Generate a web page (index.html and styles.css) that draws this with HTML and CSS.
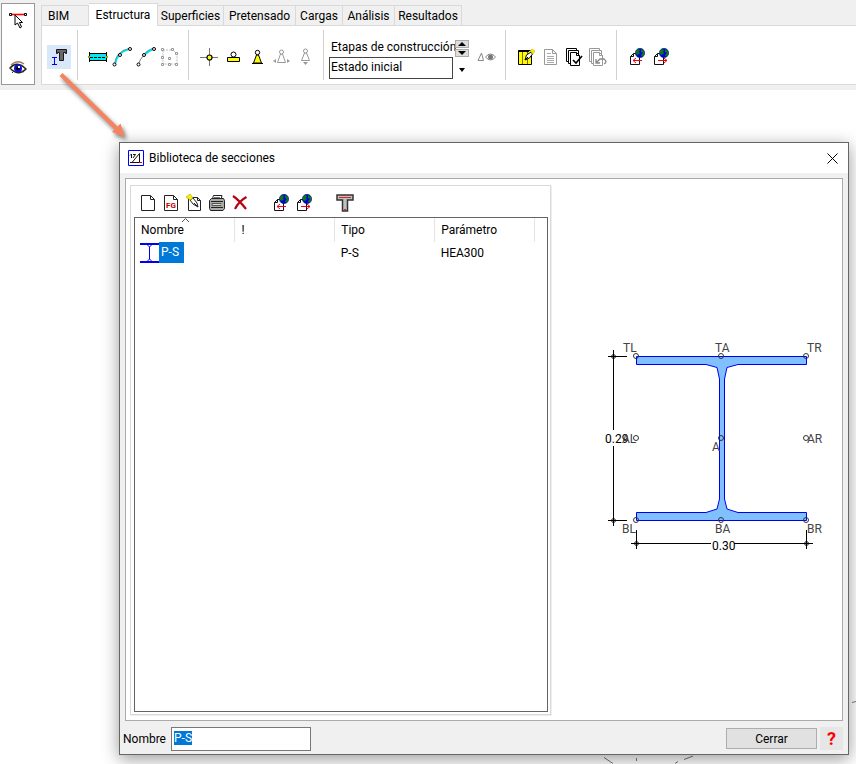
FILE: index.html
```html
<!DOCTYPE html>
<html lang="es">
<head>
    <meta charset="UTF-8">
    <meta name="viewport" content="width=device-width, initial-scale=1.0">
    <title>Biblioteca de secciones</title>
    <link rel="stylesheet" href="styles.css">
</head>
<body>
    <!-- shared icons -->
    <svg class="defs" aria-hidden="true">
        <symbol id="globe" viewBox="0 0 10 10">
            <circle cx="5" cy="5" r="4.7" fill="#0000e0" stroke="#103050" stroke-width=".6"/>
            <path d="M1 3L3 1L5 2L4 4L5 5L3 7L1 6ZM6 1L9 3L9 7L7 9L6 7L8 5L6 4Z" fill="#087818"/>
        </symbol>
        <symbol id="import" viewBox="0 0 18 18">
            <path d="M2.5 16.5V8.5L5.5 5.5H11.5V16.5Z" fill="#fff" stroke="#111"/>
            <path d="M2.5 8.5H5.5V5.5" fill="none" stroke="#111"/>
            <use href="#globe" x="7" y="0" width="10" height="10"/>
            <path d="M5 12.5H14M8 10L5 12.5L8 15" fill="none" stroke="#f00018"/>
        </symbol>
        <symbol id="export" viewBox="0 0 18 18">
            <path d="M2.5 16.5V8.5L5.5 5.5H11.5V16.5Z" fill="#fff" stroke="#111"/>
            <path d="M2.5 8.5H5.5V5.5" fill="none" stroke="#111"/>
            <use href="#globe" x="7" y="0" width="10" height="10"/>
            <path d="M6 12.5H15M12 10L15 12.5L12 15" fill="none" stroke="#f00018"/>
        </symbol>
    </svg>

    <header class="app-bar">
        <div class="side-tools">
            <button aria-label="Seleccionar">
                <svg width="20" height="18" viewBox="0 0 20 18">
                    <path d="M3 3.5H17" stroke="#f00" stroke-width="1.6"/>
                    <path d="M1.5 2.5H3.5V4.5H1.5ZM16.5 2.5H18.5V4.5H16.5Z" fill="#fff" stroke="#000"/>
                    <path d="M7 4L7 14L9.5 12L12 17L13.5 16L11.5 11.5H14.5Z" fill="#fff" stroke="#000"/>
                </svg>
            </button>
            <button aria-label="Visualizar">
                <svg width="18" height="16" viewBox="0 0 18 16">
                    <path d="M2 5Q8 -1 15 4" fill="none" stroke="#a07858" stroke-width="1.5"/>
                    <path d="M1 8Q8 0 17 9Q9 17 1 8Z" fill="#fff" stroke="#222" stroke-width="1.4"/>
                    <circle cx="9" cy="8.5" r="4" fill="#1010d0"/>
                    <circle cx="9" cy="8.5" r="1.8" fill="#000"/>
                    <path d="M9 6h2v2h-2z" fill="#fff"/>
                    <path d="M3 13L5 11M15 12L13 11" stroke="#333"/>
                </svg>
            </button>
        </div>
        <div class="ribbon">
            <nav class="tabs">
                <a href="#">BIM</a>
                <a href="#" class="active">Estructura</a>
                <a href="#">Superficies</a>
                <a href="#">Pretensado</a>
                <a href="#">Cargas</a>
                <a href="#">Análisis</a>
                <a href="#">Resultados</a>
            </nav>
            <div class="groups">
                <div class="group first">
                    <button class="tool selected" aria-label="Biblioteca de secciones">
                        <svg width="18" height="18" viewBox="0 0 18 18">
                            <path d="M2 9.5H7M4.5 9.5V16M2 16.5H7" stroke="#0000f0"/>
                            <path d="M6.5 1.5H16.500V5.500H15.500V4.500H13.500V12.500H9.500V4.500H7.500V5.500H6.500Z" fill="#686868" stroke="#181818"/>
                        </svg>
                    </button>
                </div>
                <div class="group">
                    <button class="tool" aria-label="Barra">
                        <svg width="20" height="12" viewBox="0 0 20 12">
                            <path d="M2 2H18V10H2Z" fill="#00e8f0"/>
                            <path d="M1.5 1V11M18.5 1V11M2 2.5H18M2 9.5H18" stroke="#000"/>
                            <path d="M2 6.5H18" stroke="#000" stroke-dasharray="3 1"/>
                            <path d="M0 5h2v2h-2zM18 5h2v2h-2z" fill="#a0a000"/>
                        </svg>
                    </button>
                    <button class="tool" aria-label="Barra curva">
                        <svg width="20" height="20" viewBox="0 0 20 20">
                            <path d="M3 17Q5 5 17 2" fill="none" stroke="#00e0e8" stroke-width="2"/>
                            <path d="M2.5 17Q4 4 17 1.5" fill="none" stroke="#678" stroke-width=".6"/>
                            <g fill="#fff" stroke="#000"><circle cx="2.500" cy="17.500" r="1.500"/><circle cx="8" cy="8" r="1.500"/><circle cx="18" cy="2" r="1.500"/></g>
                        </svg>
                    </button>
                    <button class="tool" aria-label="Barra de arco">
                        <svg width="20" height="20" viewBox="0 0 20 20">
                            <path d="M2.500 17Q4 12 8 8" fill="none" stroke="#777"/>
                            <path d="M8 8Q12 4 17 2" fill="none" stroke="#00e0e8" stroke-width="2"/>
                            <path d="M8 7Q12 3 17 1" fill="none" stroke="#678" stroke-width=".6"/>
                            <g fill="#fff" stroke="#000"><circle cx="2.500" cy="17.500" r="1.500"/><circle cx="8" cy="8" r="1.500"/><circle cx="18" cy="2" r="1.500"/></g>
                        </svg>
                    </button>
                    <button class="tool" aria-label="Placa">
                        <svg width="20" height="20" viewBox="0 0 20 20">
                            <path d="M3 3H13L17 7V17H3Z" fill="none" stroke="#bbb" stroke-dasharray="2 1"/>
                            <g fill="#fff" stroke="#999"><path d="M1.500 1.500h2v2h-2zM11.500 1.500h2v2h-2zM15.500 5.500h2v2h-2zM1.500 9.500h2v2h-2zM8.500 10.500h2v2h-2zM1.500 16.500h2v2h-2zM8.500 16.500h2v2h-2zM15.500 16.500h2v2h-2z"/></g>
                        </svg>
                    </button>
                </div>
                <div class="group">
                    <button class="tool" aria-label="Nudo">
                        <svg width="18" height="18" viewBox="0 0 18 18">
                            <path d="M0 9.500H18M9.500 0V18" stroke="#777"/>
                            <circle cx="9.500" cy="9.500" r="2.500" fill="#ff0" stroke="#000" stroke-width="1.200"/>
                        </svg>
                    </button>
                    <button class="tool" aria-label="Apoyo lineal">
                        <svg width="14" height="12" viewBox="0 0 14 12">
                            <circle cx="7.500" cy="3.500" r="2.500" fill="#fff" stroke="#000"/>
                            <path d="M1.500 6.500H13.500V10.500H1.500Z" fill="#ff0" stroke="#000"/>
                        </svg>
                    </button>
                    <button class="tool" aria-label="Apoyo">
                        <svg width="12" height="16" viewBox="0 0 12 16">
                            <path d="M5.500 6L2.500 14H10.500L7.500 6Z" fill="#ff0" stroke="#000"/>
                            <circle cx="6.500" cy="3.500" r="2.200" fill="#fff" stroke="#000"/>
                            <path d="M1 14.500H12" stroke="#000"/>
                        </svg>
                    </button>
                    <button class="tool" aria-label="Apoyo deslizante">
                        <svg width="18" height="16" viewBox="0 0 18 16">
                            <g fill="#fff" stroke="#999"><path d="M8.500 5L5.500 13.500H13.500L10.500 5Z"/><circle cx="9.500" cy="3" r="2"/></g>
                            <path d="M4 10V14L1 12ZM15 10V14L18 12Z" fill="#999"/>
                        </svg>
                    </button>
                    <button class="tool" aria-label="Apoyo vertical">
                        <svg width="12" height="18" viewBox="0 0 12 18">
                            <g fill="#fff" stroke="#999"><path d="M5.500 5L2.500 12.500H10.500L7.500 5Z"/><circle cx="6.500" cy="3" r="2"/></g>
                            <path d="M4 14H9L6.500 17Z" fill="#999"/>
                        </svg>
                    </button>
                </div>
                <div class="group stage">
                    <div class="stage-field">
                        <label for="etapa">Etapas de construcción:</label>
                        <select id="etapa">
                            <option>Estado inicial</option>
                        </select>
                    </div>
                    <div class="stage-arrows">
                        <button aria-label="Etapa anterior"><svg width="8" height="4" viewBox="0 0 8 4"><path d="M4 0L8 4H0Z"/></svg></button>
                        <button aria-label="Etapa siguiente"><svg width="8" height="4" viewBox="0 0 8 4"><path d="M0 0H8L4 4Z"/></svg></button>
                        <svg class="drop" width="6" height="4" viewBox="0 0 6 4"><path d="M0 0H6L3 4Z"/></svg>
                    </div>
                    <button class="tool" aria-label="Ver diferencias">
                        <svg width="20" height="10" viewBox="0 0 20 10">
                            <path d="M1 8.500L4.500 1L6.500 8.500Z" fill="none" stroke="#888"/>
                            <path d="M8.500 5Q13.500 -1 18.500 5Q13.500 11 8.500 5Z" fill="none" stroke="#888"/>
                            <circle cx="13.500" cy="5" r="2.500" fill="#777"/>
                        </svg>
                    </button>
                </div>
                <div class="group">
                    <button class="tool" aria-label="Editar tabla">
                        <svg width="18" height="18" viewBox="0 0 18 18">
                            <path d="M1.500 2.500H14.500V16.500H1.500Z" fill="#ff0" stroke="#000"/>
                            <path d="M1.500 3H12" stroke="#000" stroke-width="2"/>
                            <path d="M5.500 4V16M10.500 4V16" stroke="#886600"/>
                            <path d="M8 12L9.500 7L14 4L15.500 6L12.500 10Z" fill="#fff" stroke="#000"/>
                            <path d="M13 3L15 1L18 3L16 6Z" fill="#f8e800" stroke="#c8b800" stroke-width=".6"/>
                            <path d="M8 12L11 9" stroke="#000"/>
                        </svg>
                    </button>
                    <button class="tool" aria-label="Documento">
                        <svg width="16" height="18" viewBox="0 0 16 18">
                            <path d="M2.500 1.500H10.500L14.500 5.500V16.500H2.500ZM10.500 1.500V5.500H14.500" fill="#fff" stroke="#999"/>
                            <path d="M5 5.500H9M5 8.500H12M5 10.500H12M5 12.500H12M5 14.500H12" stroke="#aaa"/>
                        </svg>
                    </button>
                    <button class="tool" aria-label="Aplicar">
                        <svg width="18" height="20" viewBox="0 0 18 20">
                            <g fill="#fff" stroke="#000"><path d="M1.500 1.500H11.500V14.500H1.500Z"/><path d="M3.500 3.500H13.500V16.500H3.500Z"/><path d="M5.500 5.500H11.500L14.500 8.500V18.500H5.500ZM11.500 5.500V8.500H14.500"/></g>
                            <path d="M8 13L11 16L17 9" fill="none" stroke="#000" stroke-width="1.600"/>
                        </svg>
                    </button>
                    <button class="tool" aria-label="Deshacer">
                        <svg width="20" height="20" viewBox="0 0 20 20">
                            <g fill="#fff" stroke="#999"><path d="M1.500 1.500H11.500V14.500H1.500Z"/><path d="M3.500 3.500H13.500V16.500H3.500Z"/><path d="M5.500 5.500H11.500L14.500 8.500V18.500H5.500ZM11.500 5.500V8.500H14.500"/></g>
                            <path d="M8 16L12 12H16Q20 15 16 17M8 12V16H12" fill="none" stroke="#888" stroke-width="1.300"/>
                        </svg>
                    </button>
                </div>
                <div class="group last">
                    <button class="tool" aria-label="Importar"><svg width="18" height="18"><use href="#import"/></svg></button>
                    <button class="tool" aria-label="Exportar"><svg width="18" height="18"><use href="#export"/></svg></button>
                </div>
            </div>
        </div>
    </header>

    <main class="workspace">
        <svg class="model" width="256" height="64" viewBox="600 700 256 64" fill="none" stroke="#777">
            <path d="M604 757.500L613 763.500M636.500 758V761M675 763.500L678 761.500M684 759.500L693 756M852 702.500L856 701.500"/>
        </svg>
    </main>

    <section class="dialog" role="dialog" aria-labelledby="dialog-title">
        <div class="title-bar">
            <svg width="16" height="16" viewBox="0 0 16 16">
                <path d="M.5 .5H15.500V15.500H.5Z" fill="#fff" stroke="#0000f0"/>
                <path d="M2 5.500L3.500 4V8M5 4.500H7.500L5 8M4 12.500L11.500 3.500V12M2 12.500H11" fill="none" stroke="#111"/>
                <path d="M11 12.500H14" stroke="#e00000"/>
            </svg>
            <h1 id="dialog-title">Biblioteca de secciones</h1>
            <button class="close" aria-label="Cerrar ventana">
                <svg width="11" height="11" viewBox="0 0 11 11"><path d="M.5 .5L10.500 10.500M10.500 .5L.5 10.500" stroke="#000"/></svg>
            </button>
        </div>

        <div class="content">
            <div class="library">
                <div class="toolbar">
                    <button aria-label="Nuevo">
                        <svg width="16" height="18" viewBox="0 0 16 18"><path d="M1.500 1.500H10.500L14.500 5.500V16.500H1.500ZM10.500 1.500V5.500H14.500" fill="#fff" stroke="#222"/></svg>
                    </button>
                    <button aria-label="Nuevo FG">
                        <svg width="16" height="18" viewBox="0 0 16 18">
                            <path d="M1.500 1.500H10.500L14.500 5.500V16.500H1.500ZM10.500 1.500V5.500H14.500" fill="#fff" stroke="#222"/>
                            <text class="fg" x="3" y="14">FG</text>
                        </svg>
                    </button>
                    <button aria-label="Editar">
                        <svg width="18" height="18" viewBox="0 0 18 18">
                            <path d="M3.500 3.500H12.500L15.500 6.500V16.500H3.500ZM12.500 3.500V6.500H15.500" fill="#fff" stroke="#222"/>
                            <path d="M5 6L8 4L12 9L13 13L8 10Z" fill="#fff" stroke="#222"/>
                            <path d="M1 3L5 0L8 4L5 6Z" fill="#f8f000" stroke="#b0a000" stroke-width=".6"/>
                            <path d="M9 9L13 13" stroke="#222"/>
                        </svg>
                    </button>
                    <button aria-label="Imprimir">
                        <svg width="18" height="18" viewBox="0 0 18 18">
                            <path d="M4 6L5.500 1.500H14L13 6Z" fill="#fff" stroke="#222"/>
                            <path d="M6 3.500H12" stroke="#777"/>
                            <path d="M1.500 6.500L3.500 4.500H15.500L16.500 6.500V14.500L15 16.500H2.500L1.500 14.500Z" fill="#aaa" stroke="#222"/>
                            <path d="M3 7.500H15M3 13.500H15" stroke="#222"/>
                            <path d="M4 9.500H13V11.500H4Z" fill="#ddd" stroke="#555"/>
                            <path d="M12 10h2v1h-2z" fill="#cc0"/>
                        </svg>
                    </button>
                    <button aria-label="Eliminar">
                        <svg width="16" height="16" viewBox="0 0 16 16"><path d="M1 1Q7 5 14 14M14.500 2Q7 6 3 14" fill="none" stroke="#b80010" stroke-width="2.200"/></svg>
                    </button>
                    <button class="spaced" aria-label="Importar"><svg width="18" height="18"><use href="#import"/></svg></button>
                    <button aria-label="Exportar"><svg width="18" height="18"><use href="#export"/></svg></button>
                    <button class="spaced" aria-label="Sección">
                        <svg width="18" height="18" viewBox="0 0 18 18">
                            <path d="M1 1H17V6H11.500V17H6.500V6H1Z" fill="#c0c0c0" stroke="#333" stroke-width="1.500"/>
                            <path d="M3 3.500H15M8 15.500H10" stroke="#e82020"/>
                        </svg>
                    </button>
                </div>
                <div class="table-box">
                    <table>
                        <thead>
                            <tr>
                                <th class="sorted">Nombre
                                    <svg class="sort" width="7" height="4" viewBox="0 0 7 4"><path d="M0 4L3.500 .5L7 4" fill="none" stroke="#555"/></svg>
                                </th>
                                <th>!</th>
                                <th>Tipo</th>
                                <th>Parámetro</th>
                            </tr>
                        </thead>
                        <tbody>
                            <tr>
                                <td>
                                    <div class="name">
                                        <svg width="19" height="20" viewBox="0 0 19 20"><path d="M0 1H19M0 19H19" stroke="#0000f0" stroke-width="2"/><path d="M7 1.500L9.500 4V16L7 18.500M12 1.500L9.500 4V16L12 18.500" fill="none" stroke="#0000f0"/></svg>
                                        <span>P-S</span>
                                    </div>
                                </td>
                                <td></td>
                                <td>P-S</td>
                                <td>HEA300</td>
                            </tr>
                        </tbody>
                    </table>
                </div>
            </div>

            <div class="preview">
                <svg width="260" height="220" viewBox="567 340 260 220">
                    <!-- HEA profile -->
                    <path d="M636.500 356.500H806.500V364.500H738L727 367.500L724.500 379V499L727 509L738 512.500H806.500V520.500H636.500V512.500H706L717 509L719.500 499V379L717 367.500L706 364.500H636.500Z" fill="#80c0ff" stroke="#0000f0"/>
                    <!-- dimension lines -->
                    <g stroke="#000">
                        <path d="M613.500 350V430M613.500 446V526M608 356.500H627M608 520.500H627"/>
                        <path d="M631 543.500H711M734 543.500H813M636.500 530V549M806.500 530V549"/>
                    </g>
                    <g fill="none" stroke="#000">
                        <path d="M611 356.500L613.500 354L616 356.500L613.500 359ZM611 520.500L613.500 518L616 520.500L613.500 523ZM634 543.500L636.500 541L639 543.500L636.500 546ZM804 543.500L806.500 541L809 543.500L806.500 546Z"/>
                    </g>
                    <!-- reference points -->
                    <g fill="none" stroke="#333">
                        <circle cx="636" cy="356" r="2.500"/><circle cx="721" cy="356" r="2.500"/><circle cx="806" cy="356" r="2.500"/>
                        <circle cx="636" cy="438" r="2.500"/><circle cx="721" cy="438" r="2.500"/><circle cx="806" cy="438" r="2.500"/>
                        <circle cx="636" cy="520" r="2.500"/><circle cx="721" cy="520" r="2.500"/><circle cx="806" cy="520" r="2.500"/>
                    </g>
                    <g class="dim">
                        <text x="605" y="443">0.29</text>
                        <text x="712" y="550">0.30</text>
                    </g>
                    <g class="pt">
                        <text x="623" y="352">TL</text>
                        <text x="715" y="352">TA</text>
                        <text x="807" y="352">TR</text>
                        <text x="622" y="443">AL</text>
                        <text x="712" y="451">A</text>
                        <text x="807" y="443">AR</text>
                        <text x="622" y="533">BL</text>
                        <text x="715" y="533">BA</text>
                        <text x="807" y="533">BR</text>
                    </g>
                </svg>
            </div>
        </div>

        <div class="footer">
            <label for="nombre">Nombre</label>
            <input type="text" id="nombre" value="P-S">
            <button class="btn">Cerrar</button>
            <button class="help" aria-label="Ayuda">?</button>
        </div>
    </section>

    <svg class="callout" width="90" height="80" viewBox="50 65 90 80">
        <path d="M62.500 73L117.500 126.500L120.500 123.500L125 137L112 132L114.500 129.500L59.500 76Z" fill="#f4845f"/>
    </svg>

    <script>
        document.getElementById('nombre').select();
    </script>
</body>
</html>
```

FILE: styles.css
```css
* {
    box-sizing: border-box;
}
body {
    margin: 0;
    min-height: 100vh;
    display: flex;
    flex-direction: column;
    position: relative;
    background-color: #fff;
    color: #000;
    font-family: Roboto, "Open Sans", sans-serif;
    font-size: 12px;
    line-height: 16px;
    overflow: hidden;
}
button, input, select {
    font: inherit;
    color: inherit;
    padding: 0;
    margin: 0;
}
button {
    display: flex;
    align-items: center;
    justify-content: center;
    border: none;
    background: none;
}
svg {
    display: block;
    flex: none;
}
.defs {
    position: absolute;
    width: 0;
    height: 0;
}

/* ribbon */
.app-bar {
    display: flex;
    gap: 6px;
    padding: 3px 0 5px 1px;
    background-color: #f0f0f0;
}
.side-tools {
    display: flex;
    flex-direction: column;
    justify-content: space-between;
    width: 34px;
    padding: 4px;
    border: 1px solid #999;
    background-color: #fff;
}
.side-tools button {
    height: 24px;
}
.ribbon {
    flex: 1;
}
.tabs {
    display: grid;
    grid-template-columns: 48px 69px 66px 72px 47px 52px 67px;
    align-items: end;
    height: 22px;
}
.tabs a {
    height: 20px;
    padding-top: 2px;
    border: 1px solid #d9d9d9;
    border-width: 1px 1px 0 0;
    color: #000;
    text-align: center;
    text-decoration: none;
}
.tabs a:first-child {
    padding-left: 6px;
    border-left-width: 1px;
    text-align: left;
}
.tabs a.active {
    height: 23px;
    padding-top: 3px;
    margin-bottom: -1px;
    background-color: #fff;
}
.groups {
    display: flex;
    height: 60px;
    padding: 4px 0;
    border: 1px solid #d9d9d9;
    border-right: none;
    background-color: #fff;
}
.group {
    display: flex;
    align-items: center;
    padding: 4px 6px 0 8px;
    border-right: 1px solid #d0d0d0;
}
.group.first {
    padding-left: 5px;
}
.group.last {
    border-right: none;
}
.tool {
    width: 24px;
    height: 24px;
}
.tool.selected {
    background-color: #d9e8f8;
}
.stage {
    padding-left: 5px;
}
.stage-field {
    width: 124px;
    margin-top: 4px;
}
.stage-field label {
    display: block;
    height: 18px;
    padding-left: 2px;
    white-space: nowrap;
}
.stage-field select {
    display: block;
    width: 100%;
    height: 22px;
    padding: 0 1px 2px;
    border: 1px solid #444;
    border-radius: 0;
    background-color: #fff;
    appearance: none;
}
.stage-arrows {
    display: flex;
    flex-direction: column;
    gap: 1px;
    height: 38px;
    width: 14px;
    margin: 4px 6px 0 2px;
}
.stage-arrows button {
    height: 8px;
    border: 1px solid #aaa;
    background-color: #ddd;
}
.drop {
    margin: 10px auto 0;
}

/* workspace */
.workspace {
    flex: 1;
    display: flex;
    align-items: flex-end;
    justify-content: flex-end;
}

/* dialog */
.dialog {
    position: absolute;
    top: 142px;
    right: 7px;
    bottom: 9px;
    left: 119px;
    display: flex;
    flex-direction: column;
    border: 1px solid #666;
    background-color: #f0f0f0;
    box-shadow: 0 4px 16px rgba(0, 0, 0, 0.4);
}
.title-bar {
    display: flex;
    align-items: center;
    gap: 5px;
    height: 30px;
    padding: 0 10px 0 8px;
    background-color: #fff;
}
.title-bar h1 {
    margin: 0;
    font-size: 12px;
    font-weight: normal;
}
.close {
    margin-left: auto;
}
.content {
    flex: 1;
    display: flex;
    margin: 5px 5px 0;
    border: 1px solid #aaa;
    background-color: #fff;
}
.library {
    display: flex;
    flex-direction: column;
    width: 421px;
    margin: 6px 0 5px 4px;
    padding: 0 2px 2px 3px;
    border: 1px solid #d9d9d9;
    box-shadow: 1px 1px 0 #eee;
}
.toolbar {
    display: flex;
    height: 31px;
    padding: 2px 0 0 2px;
}
.toolbar button {
    width: 23px;
    height: 29px;
}
.toolbar .spaced {
    margin-left: 18px;
}
.fg {
    fill: #c00000;
    font-size: 8px;
    font-weight: bold;
}
.table-box {
    flex: 1;
    border: 1px solid #646464;
}
table {
    width: 400px;
    border-collapse: collapse;
    table-layout: fixed;
}
th {
    position: relative;
    height: 24px;
    padding: 0 6px;
    border-right: 1px solid #e5e5e5;
    font-weight: normal;
    text-align: left;
}
.sort {
    position: absolute;
    top: 0;
    left: 47px;
}
td {
    height: 21px;
    padding: 0 6px;
}
td:first-child {
    padding: 0 0 0 5px;
}
.name {
    display: flex;
    align-items: center;
}
.name span {
    height: 21px;
    padding: 2px 5px 0 2px;
    background-color: #0078d7;
    color: #fff;
}
.preview {
    flex: 1;
    display: flex;
    align-items: center;
    justify-content: center;
}
.pt {
    fill: #444;
}
.footer {
    display: flex;
    align-items: center;
    height: 33px;
    padding: 2px 5px 0 3px;
}
.footer label {
    width: 48px;
}
.footer input {
    width: 140px;
    height: 24px;
    padding: 0 2px 2px;
    border: 1px solid #777;
    outline: none;
    background-color: #fff;
}
.footer input::selection {
    background-color: #0078d7;
    color: #fff;
}
.btn {
    width: 91px;
    height: 21px;
    margin: 0 3px 0 auto;
    border: 1px solid #adadad;
    background-color: #e1e1e1;
}
.help {
    width: 23px;
    height: 23px;
    background-color: #e6e6e6;
    color: #f00;
    font-size: 18px;
    font-weight: bold;
}

/* arrow from the ribbon button to the dialog */
.callout {
    position: absolute;
    top: 65px;
    left: 50px;
    filter: drop-shadow(2px 3px 2px rgba(0, 0, 0, 0.5));
    pointer-events: none;
}
```
